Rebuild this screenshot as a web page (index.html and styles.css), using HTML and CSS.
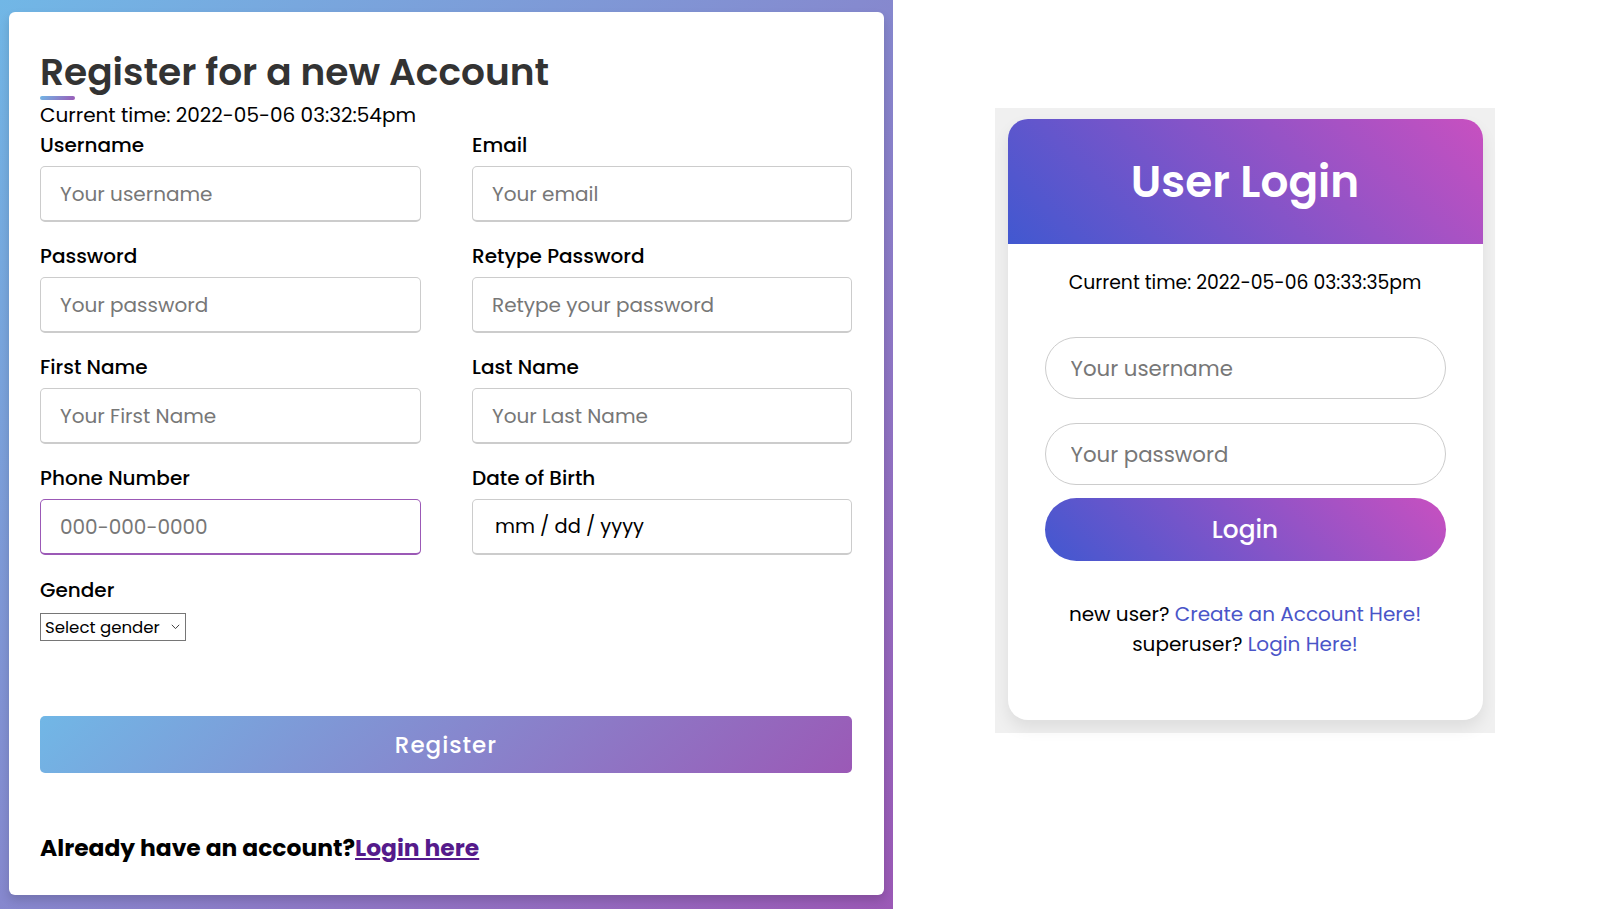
FILE: index.html
```html
<!DOCTYPE html>
<html lang="en">
<head>
<meta charset="utf-8">
<title>Register</title>
<link rel="stylesheet" href="styles.css">
</head>
<body>
<div class="page">
  <section class="reg-bg">
    <div class="reg-card">
      <h1 class="title">Register for a new Account</h1>
      <p class="time">Current time: 2022-05-06 03:32:54pm</p>
      <form class="reg-form">
        <div class="grid">
          <div class="field"><label>Username</label><input type="text" placeholder="Your username"></div>
          <div class="field"><label>Email</label><input type="text" placeholder="Your email"></div>
          <div class="field"><label>Password</label><input type="text" placeholder="Your password"></div>
          <div class="field"><label>Retype Password</label><input type="text" placeholder="Retype your password"></div>
          <div class="field"><label>First Name</label><input type="text" placeholder="Your First Name"></div>
          <div class="field"><label>Last Name</label><input type="text" placeholder="Your Last Name"></div>
          <div class="field"><label>Phone Number</label><input class="focused" type="text" placeholder="000-000-0000"></div>
          <div class="field"><label>Date of Birth</label><input class="date" type="text" value="mm / dd / yyyy"></div>
        </div>
        <div class="gender">
          <label>Gender</label>
          <div class="select-wrap">
            <select><option>Select gender</option></select>
            <svg class="chev" width="9" height="6" viewBox="0 0 9 6"><path d="M0.8 0.8 L4.5 4.6 L8.2 0.8" fill="none" stroke="#444" stroke-width="1"/></svg>
          </div>
        </div>
        <button type="button" class="reg-btn">Register</button>
      </form>
      <p class="already">Already have an account?<a href="#">Login here</a></p>
    </div>
  </section>
  <section class="login-area">
    <div class="login-panel">
      <div class="login-card">
        <div class="login-head"><h2>User Login</h2></div>
        <div class="login-body">
          <p class="login-time">Current time: 2022-05-06 03:33:35pm</p>
          <input class="pill" type="text" placeholder="Your username">
          <input class="pill pw" type="text" placeholder="Your password">
          <button type="button" class="login-btn">Login</button>
          <p class="links">new user? <a href="#">Create an Account Here!</a><br>superuser? <a href="#">Login Here!</a></p>
        </div>
      </div>
    </div>
  </section>
</div>
</body>
</html>
```

FILE: styles.css
```css
* { box-sizing: border-box; }

body {
  margin: 0;
  font-family: "Poppins", "Open Sans", sans-serif;
  background: #fff;
  color: #000;
}

.page {
  display: flex;
  height: 909px;
  overflow: hidden;
}

/* ---------- Register ---------- */
.reg-bg {
  flex: none;
  width: 893px;
  height: 909px;
  padding: 12px 9px 14px;
  background: linear-gradient(135deg, #71b7e6, #9b59b6);
}

.reg-card {
  height: 883px;
  background: #fff;
  border-radius: 6px;
  padding: 39px 32px 0 31px;
  box-shadow: 0 5px 10px rgba(0, 0, 0, 0.15);
}

.title {
  margin: 0;
  font-size: 37.5px;
  line-height: 43px;
  font-weight: 600;
  color: #333;
}

.title::after {
  content: "";
  display: block;
  width: 35px;
  height: 4px;
  margin-top: 2px;
  border-radius: 2px;
  background: linear-gradient(135deg, #71b7e6, #9b59b6);
}

.time {
  margin: 2px 0 0;
  font-size: 20px;
  line-height: 26px;
}

.grid {
  display: grid;
  grid-template-columns: 381px 380px;
  column-gap: 51px;
  row-gap: 22px;
  margin-top: 5px;
}

.field label,
.gender label {
  display: block;
  font-size: 20px;
  line-height: 24px;
  font-weight: 500;
  margin-bottom: 9px;
}

.field input {
  display: block;
  width: 100%;
  height: 56px;
  padding: 0 0 0 19px;
  font-family: inherit;
  font-size: 20px;
  color: #000;
  border: 1px solid #ccc;
  border-bottom-width: 2px;
  border-radius: 5px;
  outline: none;
}

.field input::placeholder { color: #777; }

.field input.focused { border-color: #9b59b6; }

.field input.date { padding-left: 22px; font-size: 19.4px; }

.gender { margin-top: 23px; }

.gender label { margin-bottom: 11px; }

.select-wrap {
  position: relative;
  width: 146px;
}

.select-wrap select {
  display: block;
  width: 146px;
  height: 28px;
  -webkit-appearance: none;
  appearance: none;
  font-family: inherit;
  font-size: 16.6px;
  color: #000;
  background: #fff;
  border: 1px solid #767676;
  border-radius: 0;
  padding: 0 0 0 4px;
  outline: none;
}

.chev {
  position: absolute;
  right: 6px;
  top: 11px;
  pointer-events: none;
}

.reg-btn {
  display: block;
  width: 100%;
  height: 57px;
  margin-top: 75px;
  border: none;
  border-radius: 5px;
  font-family: inherit;
  font-size: 23px;
  font-weight: 500;
  letter-spacing: 1px;
  color: #fff;
  background: linear-gradient(135deg, #71b7e6, #9b59b6);
}

.already {
  margin: 60px 0 0;
  font-size: 23.4px;
  line-height: 30px;
  font-weight: 700;
}

.already a { color: #551a8b; text-decoration: underline; }

/* ---------- Login ---------- */
.login-area {
  flex: 1;
  display: flex;
  justify-content: center;
  align-items: flex-start;
  padding: 108px 4px 0 0;
}

.login-panel {
  width: 500px;
  height: 625px;
  padding: 11px 12px 13px 13px;
  background: #f0f0f0;
}

.login-card {
  height: 601px;
  background: #fff;
  border-radius: 20px;
  overflow: hidden;
  box-shadow: 0 8px 16px rgba(0, 0, 0, 0.08);
}

.login-head {
  height: 125px;
  display: flex;
  align-items: center;
  justify-content: center;
  background: linear-gradient(45deg, #4158d0, #c850c0);
}

.login-head h2 {
  margin: 0;
  font-size: 43.8px;
  line-height: 56px;
  font-weight: 600;
  color: #fff;
}

.login-body {
  display: flex;
  flex-direction: column;
  align-items: center;
  padding-top: 26px;
}

.login-time {
  margin: 0;
  font-size: 18.8px;
  line-height: 26px;
}

.pill {
  width: 401px;
  height: 62px;
  margin-top: 41px;
  padding: 0 0 0 25px;
  border: 1px solid #ccc;
  border-radius: 31px;
  font-family: inherit;
  font-size: 21.3px;
  outline: none;
}

.pill::placeholder { color: #777; }

.pill.pw { margin-top: 24px; }

.login-btn {
  width: 401px;
  height: 63px;
  margin-top: 13px;
  border: none;
  border-radius: 32px;
  font-family: inherit;
  font-size: 24.8px;
  font-weight: 500;
  color: #fff;
  background: linear-gradient(45deg, #4158d0, #c850c0);
}

.links {
  margin: 38px 0 0;
  text-align: center;
  font-size: 20px;
  line-height: 30px;
}

.links a { color: #4a55c8; text-decoration: none; }
```
